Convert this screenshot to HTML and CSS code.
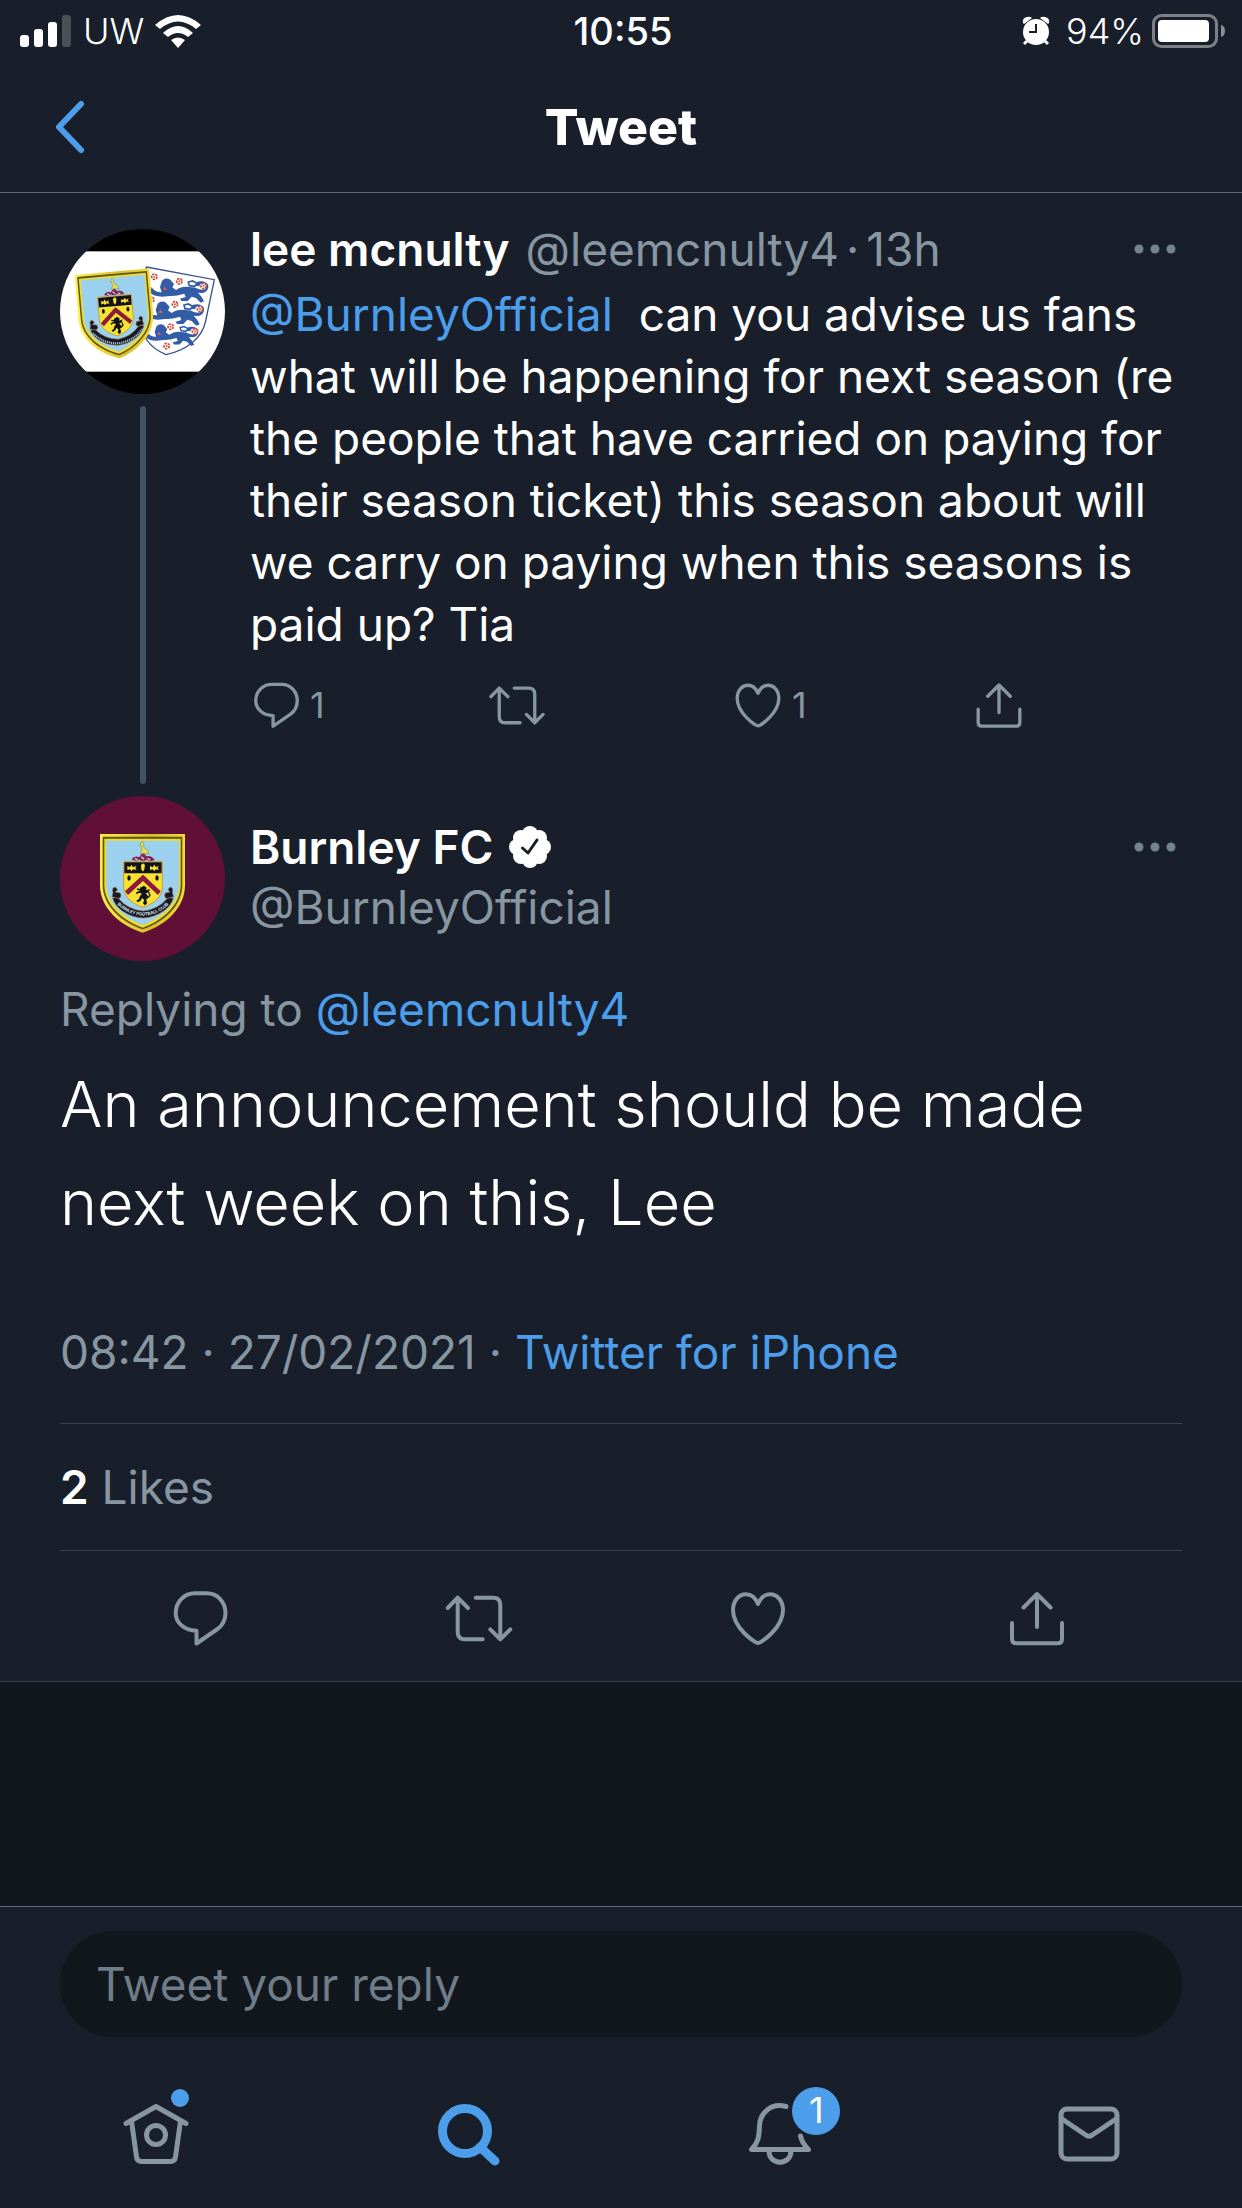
FILE: index.html
```html
<!DOCTYPE html>
<html lang="en">

<head>
    <meta charset="UTF-8">
    <meta name="viewport" content="width=device-width, initial-scale=1.0">
    <title>Tweet</title>
    <link rel="stylesheet" href="styles.css">
</head>

<body>
    <!-- Shared icons -->
    <svg class="sprite" aria-hidden="true">
        <symbol id="icon-reply" viewBox="0 0 72 72">
            <path d="M31 11.3H42.7C53.5 11.3 61.5 20 61.5 31C61.5 38 59 43 53.5 47L32.5 61.5V48.7C20.5 48.7 11.7 41 11.7 31C11.7 20 20 11.3 31 11.3Z" />
        </symbol>
        <symbol id="icon-retweet" viewBox="0 0 72 72">
            <path d="M4.7 26L14.7 15.7L25 26M14.7 16V50Q14.7 57.3 22 57.3H39.7" />
            <path d="M32.7 15.7H50Q57.3 15.7 57.3 23V57M47.3 47.3L57.3 57.3L67.3 47.3" />
        </symbol>
        <symbol id="icon-like" viewBox="0 0 72 72">
            <path d="M36 61C33 61 11 46 11 28C11 18.5 17 12.3 24 12.3C29.5 12.3 33.5 16 36 22C38.5 16 42.5 12.3 48 12.3C55 12.3 61 18.5 61 28C61 46 39 61 36 61Z" />
        </symbol>
        <symbol id="icon-share" viewBox="0 0 72 72">
            <path d="M36 12V45M22.5 25.5L36 12L49.5 25.5M11 41V57Q11 61.3 15.3 61.3H56.7Q61 61.3 61 57V41" />
        </symbol>
        <symbol id="icon-more" viewBox="0 0 42 10">
            <circle cx="5" cy="5" r="4.5" />
            <circle cx="21" cy="5" r="4.5" />
            <circle cx="37" cy="5" r="4.5" />
        </symbol>
        <linearGradient id="gold" x1="0" x2="1" y1="0" y2="0">
            <stop offset="0" stop-color="#fff04a" />
            <stop offset="0.6" stop-color="#d9bd28" />
            <stop offset="1" stop-color="#f2dc35" />
        </linearGradient>
        <!-- Claret and blue club crest -->
        <g id="crest">
            <path d="M180 162H435V315C435 385 375 437 308 458C241 437 180 385 180 315Z" fill="url(#gold)" />
            <path d="M188 170H427V315C427 378 370 428 308 448C246 428 188 378 188 315Z" fill="#5f5312" />
            <path d="M193 176H422V315C422 375 366 423 308 443C250 423 193 375 193 315Z" fill="#efda32" />
            <path d="M199 182H417V315C417 370 362 415 308 435C254 415 199 370 199 315Z" fill="#9bd1ee" />
            <path d="M251 245H367V320C367 352 340 372 309 382C278 372 251 352 251 320Z" fill="#f8e231" stroke="#c89a3c" stroke-width="3" />
            <path d="M253 247H365V280H253Z" fill="#11131c" />
            <path d="M262 258L270 262L274 254L279 262L290 257L286 264L290 270L279 268L274 273L270 268L262 270ZM330 258L338 262L343 254L348 262L357 257L353 264L357 270L348 268L343 273L338 268L330 270Z" fill="#f8e231" />
            <path d="M303 255L309 250L315 255L313 268L309 275L304 268Z" fill="#f8e231" />
            <path d="M309 284L362 334L354 345L309 303L264 345L255 334Z" fill="#8b1b3c" />
            <path d="M309 290L356 335M309 290L261 335" stroke="#8b1b3c" stroke-width="8" stroke-dasharray="6 3" />
            <ellipse cx="267" cy="294" rx="5" ry="8" fill="#11131c" />
            <ellipse cx="351" cy="294" rx="5" ry="8" fill="#11131c" />
            <!-- lion -->
            <path d="M300 323L312 317L320 323L318 331L330 327L326 337L317 340L326 350L319 357L321 371L314 376L309 370L313 360L306 354L302 362L293 367L289 362L297 357L300 348L306 341L298 338L290 343L288 337L300 332Z" fill="#11131c" />
            <path d="M321 355L330 347L326 337M291 327L301 330" fill="none" stroke="#11131c" stroke-width="4" />
            <!-- stork on the wreath -->
            <path d="M298 196L305 185L311 189L311 202L323 212L327 221H300L306 211L303 195Z" fill="#dfe05a" stroke="#8f963f" stroke-width="2" />
            <path d="M274 238Q285 225 298 232Q309 211 319 229Q334 225 344 240Q331 246 320 239Q309 246 298 239Q286 246 274 238Z" fill="#86255a" />
            <path d="M285 236L293 240M304 230L312 238M323 235L330 240" stroke="#c8dcf0" stroke-width="4" />
            <!-- ribbon -->
            <path d="M226 321Q214 323 219 337L216 350L237 356Q247 349 241 339L226 336L233 329ZM390 321Q402 323 397 337L401 350L380 356Q370 349 376 339L390 336L384 329Z" fill="#171926" stroke="#9f794c" stroke-width="2" />
            <path d="M218 355Q225 350 236 356Q263 388 309 393Q354 388 381 356Q392 350 400 355Q393 378 371 393Q342 413 309 414Q276 413 247 393Q225 378 218 355Z" fill="#141829" stroke="#a9793b" stroke-width="2" />
        </g>
        <path id="ribbon-line" d="M225 366Q258 404 309 407Q360 404 393 366" />
        <g id="lion-blue">
            <path d="M334 231Q346 248 365 247L360 231L366 212Q377 201 391 209L402 222L397 232L408 240Q425 228 448 231Q466 231 477 238Q498 243 499 229Q497 218 484 220L477 229L466 227L470 216Q494 208 505 225Q507 245 488 249L474 248L485 261L492 274L482 278L468 264L455 260L443 273H424L420 266L437 261L433 251Q409 259 389 258L366 260Q344 260 332 250Z" fill="#335ca7" />
            <path d="M445 216L458 213L471 220L464 229L448 227ZM374 219L385 226L378 231M383 245Q403 249 425 240" fill="none" stroke="#335ca7" stroke-width="5" />
            <path d="M373 229L381 240L370 240Z" fill="#e3604e" />
        </g>
        <g id="rose">
            <circle r="8" fill="#fff" stroke="#cf4638" stroke-width="5" stroke-dasharray="7 3" />
            <circle r="3" fill="#d55b43" />
        </g>
    </svg>

    <header class="top">
        <div class="status-bar">
            <div class="status-side">
                <svg class="signal" viewBox="0 0 52 33" aria-hidden="true">
                    <rect x="0" y="20" width="9" height="12" rx="3" />
                    <rect x="14" y="14" width="9" height="18" rx="3" />
                    <rect x="28" y="7" width="9" height="25" rx="3" />
                    <rect x="42" y="0" width="9" height="32" rx="3" opacity="0.22" />
                </svg>
                <span>UW</span>
                <svg class="wifi" viewBox="0 0 46 33" aria-hidden="true">
                    <path d="M0 10Q23 -10 46 10L41 14Q23 -1 5 14Z" />
                    <path d="M8 18Q23 4 38 18L33 22Q23 14 13 22Z" />
                    <path d="M16 25Q23 20 30 25L23 33Z" />
                </svg>
            </div>
            <time class="clock">10:55</time>
            <div class="status-side status-right">
                <svg class="alarm" viewBox="0 0 28 30" aria-hidden="true">
                    <path d="M1 7Q0 2 5 1Q8 0 10 2L2 8ZM27 7Q28 2 23 1Q20 0 18 2L26 8Z" />
                    <circle cx="14" cy="16" r="13" />
                    <path class="alarm-feet" d="M5 25L2 28M23 25L26 28" />
                    <path class="alarm-hands" d="M14 8V16H7" />
                </svg>
                <span>94%</span>
                <svg class="battery" viewBox="0 0 74 34" aria-hidden="true">
                    <rect class="battery-shell" x="1.5" y="1.5" width="63" height="31" rx="8" />
                    <rect x="6" y="6" width="51" height="22" rx="4" />
                    <path d="M69 11Q73 12 73 17Q73 22 69 23Z" opacity="0.5" />
                </svg>
            </div>
        </div>
        <div class="nav-bar">
            <button type="button" class="icon-button back" aria-label="Back">
                <svg viewBox="0 0 30 54"><path d="M26 4L4 27L26 50" /></svg>
            </button>
            <h1>Tweet</h1>
        </div>
    </header>

    <main>
        <article class="tweet">
            <div class="thread">
                <svg class="avatar" viewBox="60 57 495 495" role="img" aria-label="lee mcnulty">
                    <rect x="60" y="57" width="495" height="495" fill="#000" />
                    <rect x="60" y="124" width="495" height="361" fill="#fff" />
                    <path d="M319 171L523 209L497 333C487 382 443 421 378 434C325 411 302 374 306 329Z" fill="#fff" stroke="#3c568b" stroke-width="4" />
                    <use href="#lion-blue" />
                    <use href="#lion-blue" transform="translate(-13 69)" />
                    <use href="#lion-blue" transform="translate(20 158) scale(0.9)" />
                    <use href="#rose" x="343" y="200" />
                    <use href="#rose" x="418" y="214" />
                    <use href="#rose" x="491" y="228" />
                    <use href="#rose" x="334" y="269" />
                    <use href="#rose" x="405" y="283" />
                    <use href="#rose" x="480" y="297" />
                    <use href="#rose" x="392" y="350" />
                    <use href="#rose" x="465" y="364" />
                    <use href="#rose" x="380" y="408" />
                    <g transform="translate(216 185) rotate(-5) scale(0.88) translate(-308 -162)">
                        <use href="#crest" />
                        <use href="#ribbon-line" class="ribbon-marks" />
                    </g>
                </svg>
                <div class="thread-line"></div>
            </div>
            <div class="tweet-content">
                <div class="byline">
                    <strong>lee mcnulty</strong>
                    <span class="muted byline-info"><span>@leemcnulty4</span><span>·</span><span>13h</span></span>
                    <button type="button" class="icon-button more" aria-label="More"><svg><use href="#icon-more" /></svg></button>
                </div>
                <p class="tweet-text"><a href="#">@BurnleyOfficial</a>&nbsp; can you advise us fans what will be happening for next season (re the people that have carried on paying for their season ticket) this season about will we carry on paying when this seasons is paid up? Tia</p>
                <div class="actions actions-small">
                    <button type="button" class="icon-button" aria-label="Reply"><svg><use href="#icon-reply" /></svg>1</button>
                    <button type="button" class="icon-button" aria-label="Retweet"><svg><use href="#icon-retweet" /></svg></button>
                    <button type="button" class="icon-button" aria-label="Like"><svg><use href="#icon-like" /></svg>1</button>
                    <button type="button" class="icon-button" aria-label="Share"><svg><use href="#icon-share" /></svg></button>
                </div>
            </div>
        </article>

        <article class="focused">
            <div class="author">
                <svg class="avatar" viewBox="60 48 495 495" role="img" aria-label="Burnley FC">
                    <rect x="60" y="48" width="495" height="495" fill="#601037" />
                    <use href="#crest" />
                    <text class="ribbon-text"><textPath href="#ribbon-line" startOffset="50%">BURNLEY FOOTBALL CLUB</textPath></text>
                </svg>
                <div class="author-names">
                    <div class="byline">
                        <strong>Burnley FC</strong>
                        <svg class="verified" viewBox="0 0 42 42" role="img" aria-label="Verified">
                            <circle cx="21" cy="21" r="16" />
                            <circle cx="21" cy="8" r="8" />
                            <circle cx="30" cy="12" r="8" />
                            <circle cx="34" cy="21" r="8" />
                            <circle cx="30" cy="30" r="8" />
                            <circle cx="21" cy="34" r="8" />
                            <circle cx="12" cy="30" r="8" />
                            <circle cx="8" cy="21" r="8" />
                            <circle cx="12" cy="12" r="8" />
                            <path d="M13.5 22L19 27L28 14" />
                        </svg>
                        <button type="button" class="icon-button more" aria-label="More"><svg><use href="#icon-more" /></svg></button>
                    </div>
                    <span class="muted">@BurnleyOfficial</span>
                </div>
            </div>
            <p class="replying muted">Replying to <a href="#">@leemcnulty4</a></p>
            <p class="focused-text">An announcement should be made next week on this, Lee</p>
            <p class="meta muted">08:42 · 27/02/2021 · <a href="#">Twitter for iPhone</a></p>
            <p class="likes muted"><strong>2</strong> Likes</p>
            <div class="actions">
                <button type="button" class="icon-button" aria-label="Reply"><svg><use href="#icon-reply" /></svg></button>
                <button type="button" class="icon-button" aria-label="Retweet"><svg><use href="#icon-retweet" /></svg></button>
                <button type="button" class="icon-button" aria-label="Like"><svg><use href="#icon-like" /></svg></button>
                <button type="button" class="icon-button" aria-label="Share"><svg><use href="#icon-share" /></svg></button>
            </div>
        </article>
    </main>

    <footer class="dock">
        <form class="reply-form">
            <input type="text" name="reply" placeholder="Tweet your reply" aria-label="Tweet your reply">
        </form>
        <nav class="tabs">
            <a href="#" class="tab" aria-label="Home">
                <svg viewBox="0 0 72 72">
                    <path d="M7 24.500L37 7.500L67 24.500M12.500 22L17.500 58Q18 62.500 22.500 62.500H51.500Q56 62.500 56.500 58L61.500 22" />
                    <circle cx="37" cy="36" r="9.500" />
                </svg>
                <span class="dot"></span>
            </a>
            <a href="#" class="tab tab-active" aria-label="Search">
                <svg viewBox="0 0 72 72">
                    <circle cx="35" cy="32" r="22.500" />
                    <path d="M50 48L65 62" />
                </svg>
            </a>
            <a href="#" class="tab" aria-label="Notifications">
                <svg viewBox="0 0 72 72">
                    <path d="M46 7.500C30 3 20 15 19.500 27C19 39 18 44 11.500 50.500H68.500C64 46 61.500 42 60.500 37" />
                    <path d="M29 52C29 67 51 67 51 52" />
                </svg>
                <span class="badge">1</span>
            </a>
            <a href="#" class="tab" aria-label="Messages">
                <svg viewBox="0 0 72 72">
                    <rect x="10" y="10" width="56" height="50" rx="6" />
                    <path d="M11 20L35.500 36.500Q38 38 40.500 36.500L65 20" />
                </svg>
            </a>
        </nav>
    </footer>
</body>

</html>
```
FILE: styles.css
```css
/* General */
* {
    box-sizing: border-box;
}

body {
    margin: 0;
    min-height: 100vh;
    display: flex;
    flex-direction: column;
    background-color: #12161d;
    color: #fff;
    font-family: Inter, "Liberation Sans", sans-serif;
    font-size: 46px;
    line-height: 60px;
}

p,
h1 {
    margin: 0;
}

a {
    color: #4c9eeb;
    text-decoration: none;
}

strong {
    font-weight: 600;
}

.muted {
    color: #8896a2;
}

.muted strong {
    color: #fff;
}

.sprite {
    position: absolute;
    width: 0;
    height: 0;
}

.icon-button {
    display: flex;
    align-items: center;
    padding: 0;
    border: 0;
    background: none;
    color: #8896a2;
    font: inherit;
    cursor: pointer;
}

/* Header */
.top {
    background-color: #181f2a;
    border-bottom: 1px solid #5b6977;
}

.status-bar {
    display: grid;
    grid-template-columns: 1fr auto 1fr;
    align-items: center;
    height: 62px;
    padding: 0 16px 0 20px;
    font-size: 36px;
}

.status-bar svg {
    fill: #fff;
}

.status-side {
    display: flex;
    align-items: center;
    gap: 11px;
    font-weight: 300;
}

.status-right {
    justify-content: flex-end;
    gap: 8px;
}

.clock {
    font-size: 38px;
    font-weight: 500;
}

.signal {
    width: 52px;
    height: 33px;
}

.wifi {
    width: 46px;
    height: 33px;
}

.alarm {
    width: 28px;
    height: 30px;
    margin-right: 8px;
}

.alarm-feet {
    stroke: #fff;
    stroke-width: 3;
}

.status-bar .alarm-hands {
    fill: none;
    stroke: #181f2a;
    stroke-width: 2;
}

.battery {
    width: 74px;
    height: 34px;
}

.status-bar .battery-shell {
    fill: none;
    stroke: #7c8087;
    stroke-width: 3;
}

.nav-bar {
    display: grid;
    grid-template-columns: 1fr auto 1fr;
    align-items: center;
    height: 130px;
    padding: 0 55px;
}

.back svg {
    width: 30px;
    height: 54px;
    fill: none;
    stroke: #4c9eeb;
    stroke-width: 6;
    stroke-linecap: round;
    stroke-linejoin: round;
}

h1 {
    font-size: 50px;
    font-weight: 800;
}

/* Tweets */
main {
    background-color: #181f2a;
    border-bottom: 1px solid #38444d;
}

.tweet {
    display: flex;
    gap: 25px;
    padding: 36px 60px 0;
}

.thread {
    display: flex;
    flex-direction: column;
    align-items: center;
    gap: 12px;
    padding-bottom: 12px;
}

.thread-line {
    flex: 1;
    width: 6px;
    border-radius: 3px;
    background-color: #425364;
}

.avatar {
    flex: none;
    display: block;
    width: 165px;
    height: 165px;
    border-radius: 50%;
}

.ribbon-text {
    fill: #dce3ed;
    font-size: 13px;
    font-weight: 700;
    text-anchor: middle;
}

.ribbon-marks {
    fill: none;
    stroke: #b9c3d2;
    stroke-width: 7;
    stroke-dasharray: 4 3;
}

.tweet-content {
    flex: 1;
    padding-bottom: 61px;
}

.byline {
    display: flex;
    align-items: center;
    gap: 16px;
    height: 60px;
    margin-top: -10px;
}

.byline-info {
    display: flex;
    gap: 7px;
}

.more {
    margin-left: auto;
    padding-right: 6px;
}

.more svg {
    width: 42px;
    height: 10px;
    fill: #748390;
}

.tweet-text {
    margin-top: 4px;
    line-height: 62px;
}

.actions {
    display: grid;
    grid-template-columns: repeat(4, 1fr);
    justify-items: center;
    padding: 31px 6px 27px 0;
}

.actions svg {
    width: 72px;
    height: 72px;
    fill: none;
    stroke: #8896a2;
    stroke-width: 4;
    stroke-linecap: round;
    stroke-linejoin: round;
}

.actions-small {
    justify-items: start;
    margin: 20px -28px 0 -4px;
    padding: 0;
    font-size: 36px;
}

.actions-small .icon-button {
    gap: 4px;
}

.actions-small svg {
    width: 60px;
    height: 60px;
}

.focused {
    padding: 0 60px;
}

.author {
    display: flex;
    gap: 25px;
}

.author-names {
    flex: 1;
    padding-top: 31px;
}

.author .muted {
    display: block;
}

.verified {
    width: 42px;
    height: 42px;
    fill: #fff;
}

.verified path {
    fill: none;
    stroke: #181f2a;
    stroke-width: 3;
    stroke-linecap: round;
    stroke-linejoin: round;
}

.replying {
    margin-top: 18px;
}

.focused-text {
    margin-top: 16px;
    font-size: 63px;
    font-weight: 300;
    line-height: 98px;
}

.meta {
    padding: 71px 0 41px;
    border-bottom: 1px solid #38444d;
}

.likes {
    padding: 33px 0;
    border-bottom: 1px solid #38444d;
}

/* Reply box and tabs */
.dock {
    margin-top: auto;
    background-color: #181f2a;
    border-top: 1px solid #5b6977;
}

.reply-form {
    padding: 24px 60px;
}

.reply-form input {
    display: block;
    width: 100%;
    height: 106px;
    padding: 0 36px;
    border: 0;
    border-radius: 53px;
    background-color: #12161d;
    color: #fff;
    font: inherit;
}

.reply-form input::placeholder {
    color: #6f7d8a;
    opacity: 1;
}

.tabs {
    display: grid;
    grid-template-columns: repeat(4, 1fr);
    justify-items: center;
    padding: 38px 0 37px;
}

.tab {
    position: relative;
}

.tab svg {
    display: block;
    width: 72px;
    height: 72px;
    fill: none;
    stroke: #8896a2;
    stroke-width: 5;
    stroke-linecap: round;
    stroke-linejoin: round;
}

.tab-active svg {
    stroke: #4c9eeb;
    stroke-width: 9;
}

.dot {
    position: absolute;
    top: -10px;
    right: 2px;
    width: 18px;
    height: 18px;
    border-radius: 50%;
    background-color: #4c9eeb;
}

.badge {
    position: absolute;
    top: -12px;
    right: -28px;
    width: 48px;
    height: 48px;
    border-radius: 50%;
    background-color: #4c9eeb;
    color: #fff;
    font-size: 36px;
    line-height: 46px;
    text-align: center;
}
```
